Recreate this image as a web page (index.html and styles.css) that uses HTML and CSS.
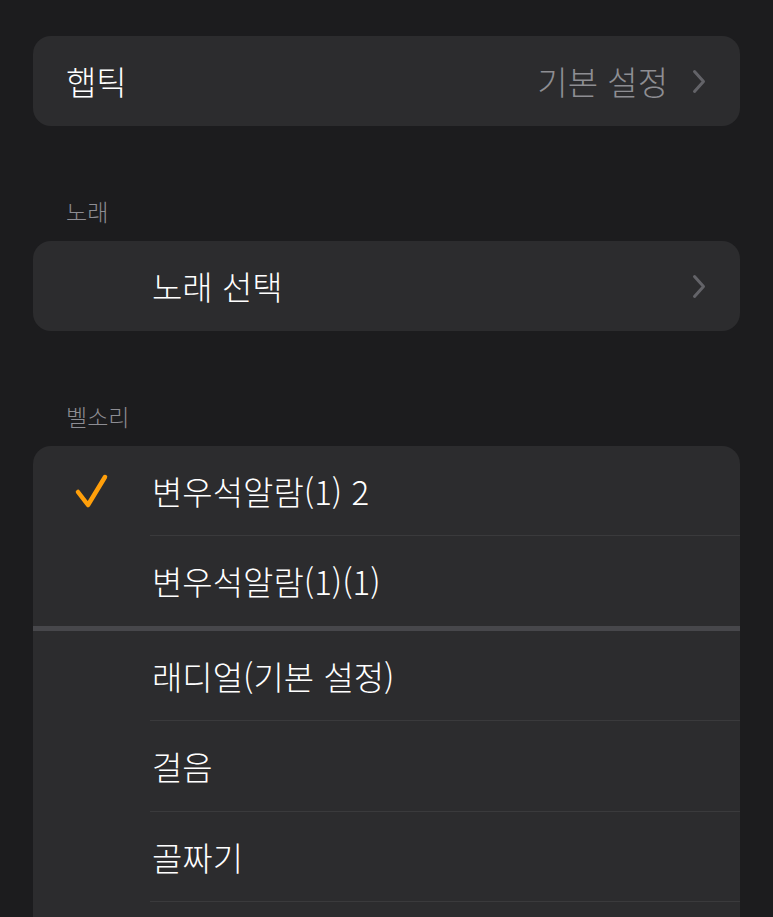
FILE: index.html
```html
<!DOCTYPE html>
<html lang="ko">
<head>
<meta charset="utf-8">
<link rel="stylesheet" href="styles.css">
</head>
<body>
<div class="page">
  <div class="card">
    <div class="row simple">
      <span class="label">햅틱</span>
      <span class="value">기본 설정</span>
      <svg class="chev" width="14" height="25" viewBox="0 0 14 25"><path d="M2.5 2.5 L11.5 12.5 L2.5 22.5" fill="none" stroke="#636368" stroke-width="3" stroke-linecap="round" stroke-linejoin="round"/></svg>
    </div>
  </div>

  <div class="section-title">노래</div>
  <div class="card">
    <div class="row">
      <div class="slot"></div>
      <div class="main last">
        <span class="label">노래 선택</span>
        <svg class="chev" width="14" height="25" viewBox="0 0 14 25"><path d="M2.5 2.5 L11.5 12.5 L2.5 22.5" fill="none" stroke="#636368" stroke-width="3" stroke-linecap="round" stroke-linejoin="round"/></svg>
      </div>
    </div>
  </div>

  <div class="section-title">벨소리</div>
  <div class="card tall">
    <div class="row">
      <div class="slot">
        <svg class="check" width="36" height="36" viewBox="0 0 36 36"><path d="M5 19 L15 32 L32 4" fill="none" stroke="#ff9f0a" stroke-width="4.5" stroke-linecap="round" stroke-linejoin="round"/></svg>
      </div>
      <div class="main"><span class="label">변우석알람(1) 2</span></div>
    </div>
    <div class="row">
      <div class="slot"></div>
      <div class="main last"><span class="label">변우석알람(1)(1)</span></div>
    </div>
    <div class="group-divider"></div>
    <div class="row">
      <div class="slot"></div>
      <div class="main"><span class="label">래디얼(기본 설정)</span></div>
    </div>
    <div class="row r91">
      <div class="slot"></div>
      <div class="main"><span class="label">걸음</span></div>
    </div>
    <div class="row">
      <div class="slot"></div>
      <div class="main"><span class="label">골짜기</span></div>
    </div>
    <div class="row">
      <div class="slot"></div>
      <div class="main"><span class="label">&nbsp;</span></div>
    </div>
  </div>
</div>
</body>
</html>
```

FILE: styles.css
```css
html, body {
  margin: 0;
  padding: 0;
  background: #1c1c1e;
  height: 100%;
  overflow: hidden;
}
body {
  font-family: "Noto Sans CJK KR", "Noto Sans", sans-serif;
  color: #ffffff;
}
.page {
  padding: 36px 33px 0 33px;
}
.card {
  background: #2c2c2e;
  border-radius: 18px;
  overflow: hidden;
}
.card.tall {
  border-bottom-left-radius: 0;
  border-bottom-right-radius: 0;
}
.row {
  display: flex;
  align-items: stretch;
  height: 90px;
}
.row.r91 {
  height: 91px;
}
.row.simple {
  align-items: center;
  padding: 0 34px 0 33px;
}
.label {
  font-size: 33px;
  font-weight: 300;
  line-height: 38px;
  color: #ffffff;
  white-space: nowrap;
}
.value {
  margin-left: auto;
  font-size: 33px;
  font-weight: 300;
  line-height: 38px;
  color: #8e8e93;
  margin-right: 24px;
}
.chev {
  display: block;
  flex: none;
}
.slot {
  width: 117px;
  flex: none;
  display: flex;
  align-items: center;
  padding-left: 40px;
  box-sizing: border-box;
}
.check {
  display: block;
}
.main {
  flex: 1;
  display: flex;
  align-items: center;
  justify-content: space-between;
  padding-left: 2px;
  padding-right: 34px;
  border-bottom: 1px solid #3a3a3c;
}
.main.last {
  border-bottom: none;
}
.group-divider {
  height: 5px;
  background: #47474b;
}
.section-title {
  margin: 70px 0 15px 33px;
  font-size: 23px;
  font-weight: 300;
  line-height: 30px;
  color: #8d8d93;
}
```
